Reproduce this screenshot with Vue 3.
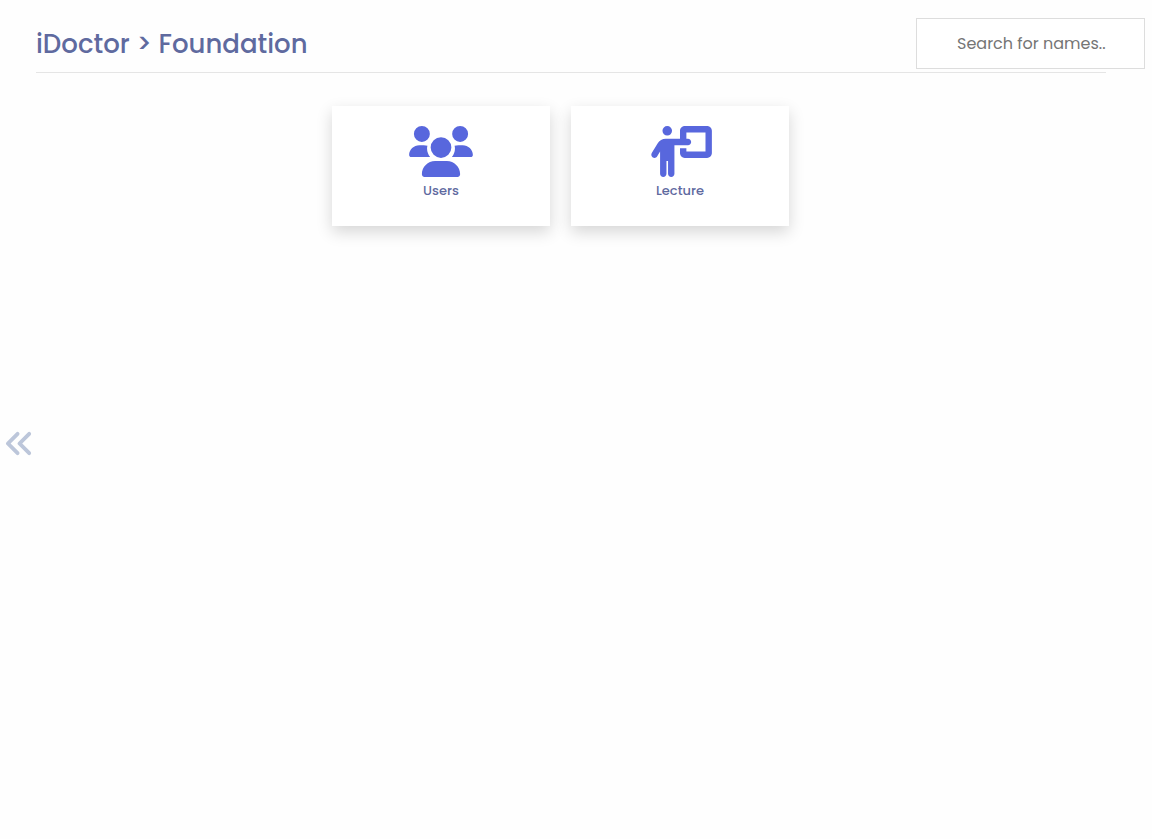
<script setup>
import { ref, computed } from 'vue'

const query = ref('')

const modules = [
  {
    name: 'Users',
    path: 'M128 0a80 80 0 1 1 0 160A80 80 0 1 1 128 0zM512 0a80 80 0 1 1 0 160A80 80 0 1 1 512 0zM0 290C0 236 47.8 192 102 192h44c14 0 27 2 38 7c-3 8-4 17-4 26c0 33 12 62 31 86H21.3C9.6 311 0 302 0 290zM429 311c19-24 31-53 31-86c0-9-1-18-4-26c11-5 24-7 38-7h44C592.2 192 640 236 640 290c0 12-9.6 21-21.3 21H429zM216 216a104 104 0 1 1 208 0 104 104 0 1 1 -208 0zM128 485.3C128 411.7 187.7 352 261.3 352H378.7C452.3 352 512 411.7 512 485.3c0 14.7-11.9 26.7-26.7 26.7H154.7c-14.7 0-26.7-11.9-26.7-26.7z'
  },
  {
    name: 'Lecture',
    path: 'M192 96a48 48 0 1 0 0-96 48 48 0 1 0 0 96zm-8 384V352h16V480c0 17.7 14.3 32 32 32s32-14.3 32-32V192h56 64 16c17.7 0 32-14.3 32-32s-14.3-32-32-32H384V64H576V256H384V224H320v48c0 26.5 21.5 48 48 48H592c26.5 0 48-21.5 48-48V48c0-26.5-21.5-48-48-48H368c-26.5 0-48 21.5-48 48v80H243.1 177.1c-33.7 0-64.9 17.7-82.3 46.6l-58.3 97c-9.1 15.1-4.2 34.8 10.9 43.9s34.8 4.2 43.9-10.9L120 256.9V480c0 17.7 14.3 32 32 32s32-14.3 32-32z'
  }
]

const visible = computed(() =>
  modules.filter((m) => m.name.toLowerCase().includes(query.value.trim().toLowerCase()))
)
</script>

<template>
  <div class="page">
    <header class="header">
      <h1 class="title">iDoctor &gt; Foundation</h1>
      <input v-model="query" class="search" type="text" placeholder="Search for names.." aria-label="Search for names" />
    </header>
    <hr class="rule" />
    <main class="cards">
      <a v-for="m in visible" :key="m.name" class="card" href="#">
        <svg class="card-icon" viewBox="0 0 640 512" aria-hidden="true"><path :d="m.path" /></svg>
        <span class="card-label">{{ m.name }}</span>
      </a>
    </main>
    <button class="toggle" type="button" aria-label="Open sidebar">
      <svg class="toggle-icon" viewBox="0 0 512 512" aria-hidden="true">
        <path d="M41.4 233.4c-12.5 12.5-12.5 32.8 0 45.3l160 160c12.5 12.5 32.8 12.5 45.3 0s12.5-32.8 0-45.3L109.3 256 246.6 118.6c12.5-12.5 12.5-32.8 0-45.3s-32.8-12.5-45.3 0l-160 160zm352-160l-160 160c-12.5 12.5-12.5 32.8 0 45.3l160 160c12.5 12.5 32.8 12.5 45.3 0s12.5-32.8 0-45.3L301.3 256 438.6 118.6c12.5-12.5 12.5-32.8 0-45.3s-32.8-12.5-45.3 0z" />
      </svg>
    </button>
  </div>
</template>

<style>
body {
  background: #fefefe;
}
</style>

<style scoped>
.page {
  display: flow-root;
  min-height: 100vh;
  font-family: Poppins, Inter, "Open Sans", sans-serif;
  color: #5f6a9f;
}
.header {
  display: flex;
  justify-content: space-between;
  align-items: center;
  padding: 18px 7px 3px 36px;
}
.title {
  margin: 0;
  font-size: 26px;
  line-height: 32px;
  font-weight: 500;
}
.search {
  box-sizing: border-box;
  width: 229px;
  height: 51px;
  padding: 12px 20px 12px 40px;
  border: 1px solid #ddd;
  background: #fff;
  font-family: inherit;
  font-size: 16px;
  color: #333;
}
.search::placeholder {
  color: #757575;
}
.rule {
  margin: 0 46px 0 36px;
  border: 0;
  border-top: 1px solid #e5e5e5;
}
.cards {
  display: flex;
  flex-wrap: wrap;
  justify-content: center;
  gap: 21px;
  margin: 33px 31px 0 0;
}
.card {
  box-sizing: border-box;
  display: flex;
  flex-direction: column;
  align-items: center;
  width: 218px;
  min-height: 120px;
  padding-top: 20px;
  background: #fff;
  box-shadow: 0 6px 15px rgba(0, 0, 0, 0.16);
  color: inherit;
  text-decoration: none;
}
.card-icon {
  width: 64px;
  height: 51px;
  fill: #5867dd;
}
.card-label {
  margin-top: 4px;
  font-size: 13px;
  line-height: 20px;
  font-weight: 500;
}
.toggle {
  position: fixed;
  top: calc(50% + 8px);
  left: 4px;
  display: flex;
  padding: 0;
  border: 0;
  background: none;
  cursor: pointer;
}
.toggle-icon {
  width: 31px;
  height: 31px;
  fill: #bcc6da;
}
</style>
